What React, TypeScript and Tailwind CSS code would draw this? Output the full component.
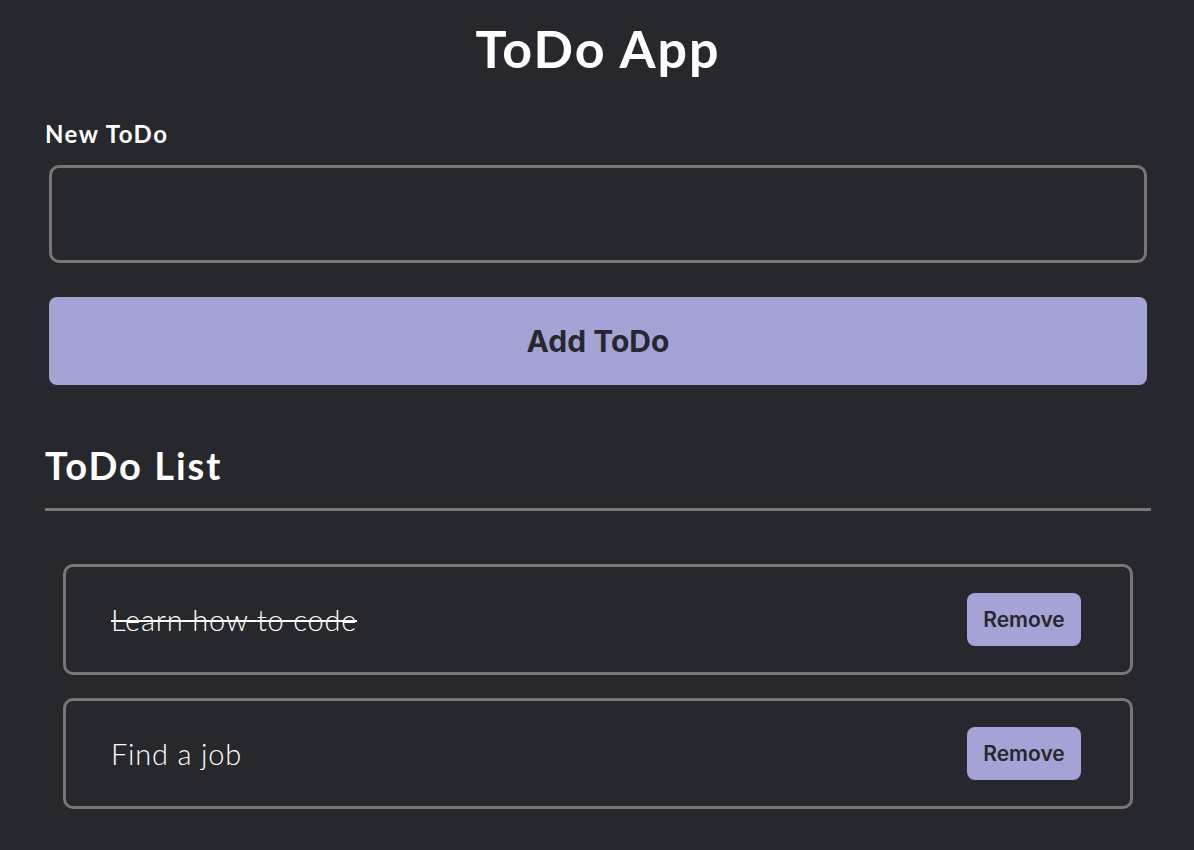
import React, { useState } from 'react';

interface Todo {
  id: number;
  text: string;
  done: boolean;
}

const App: React.FC = () => {
  const [text, setText] = useState('');
  const [todos, setTodos] = useState<Todo[]>([
    { id: 1, text: 'Learn how to code', done: true },
    { id: 2, text: 'Find a job', done: false },
  ]);

  const handleAdd = () => {
    if (!text.trim()) return;
    setTodos([...todos, { id: Date.now(), text, done: false }]);
    setText('');
  };

  const toggle = (id: number) => {
    setTodos(todos.map((t) => (t.id === id ? { ...t, done: !t.done } : t)));
  };

  const remove = (id: number) => {
    setTodos(todos.filter((t) => t.id !== id));
  };

  return (
    <div className="min-h-screen bg-[#27282d] text-white font-['Lato',sans-serif] pl-[45px] pr-[43px] pt-[16px] pb-10">
      <h1 className="text-center text-[52px] font-bold leading-[64px] tracking-[2px]">ToDo App</h1>

      <label className="block mt-[39px] text-[24px] font-bold leading-[30px] tracking-[1.5px]">New ToDo</label>
      <div className="px-[4px] mt-[16px]">
        <input
          type="text"
          value={text}
          onChange={(e) => setText(e.target.value)}
          className="block w-full h-[98px] px-4 bg-transparent border-[3px] border-[#77777a] rounded-[10px] text-[28px] text-white outline-none"
        />
        <button
          onClick={handleAdd}
          className="block w-full h-[88px] mt-[34px] bg-[#a3a3d6] rounded-[8px] text-[30px] font-bold text-[#27282d] font-['Inter',sans-serif]"
        >
          Add ToDo
        </button>
      </div>

      <h2 className="mt-[56px] text-[38px] font-bold leading-[48px] tracking-[2px]">ToDo List</h2>
      <div className="mt-[19px] h-[3px] bg-[#77777a]" />

      <div className="mt-[53px] px-[18px] flex flex-col gap-[23px]">
        {todos.map((t) => (
          <div
            key={t.id}
            className="h-[111px] flex items-center justify-between border-[3px] border-[#77777a] rounded-[10px] pl-[45px] pr-[49px]"
          >
            <span
              onClick={() => toggle(t.id)}
              className={`text-[29px] font-light tracking-[0.8px] cursor-pointer ${t.done ? 'line-through' : ''}`}
            >
              {t.text}
            </span>
            <button
              onClick={() => remove(t.id)}
              className="w-[114px] h-[53px] bg-[#a3a3d6] rounded-[8px] text-[21px] font-semibold text-[#27282d] font-['Inter',sans-serif]"
            >
              Remove
            </button>
          </div>
        ))}
      </div>
    </div>
  );
};

export default App;
